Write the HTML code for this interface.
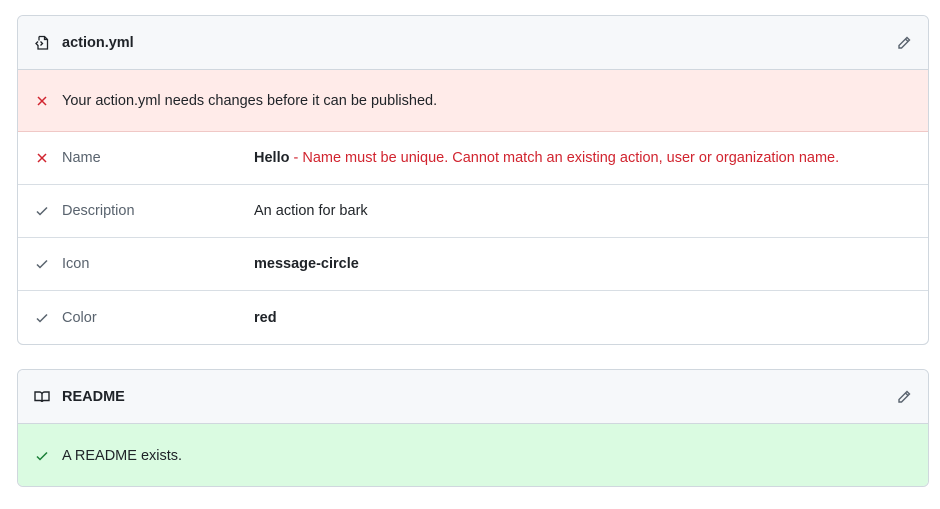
<!DOCTYPE html>
<html><head><style>
*{box-sizing:border-box;margin:0;padding:0}
body{width:940px;height:509px;background:#fff;font-family:"Liberation Sans",Arial,sans-serif;font-size:14.5px;color:#1f2328;position:relative}
.box{position:absolute;left:17px;width:912px;border:1px solid #d0d7de;border-radius:6px;overflow:hidden}
.hd{height:54px;background:#f6f8fa;border-bottom:1px solid #d0d7de;display:flex;align-items:center;padding-left:16px;font-weight:bold;position:relative}
.hd svg.i{margin-right:12px}
.pen{position:absolute;right:16px;top:19px}
.row{display:flex;align-items:center;padding-left:16px;border-bottom:1px solid #d8dee4;position:relative}
.row:last-child{border-bottom:none}
.ic{width:16px;margin-right:12px;display:flex}
.lab{width:180px;color:#59636e}
.val{position:absolute;left:236px}
</style></head><body>
<div class="box" style="top:15px;height:330px">
 <div class="hd"><svg class="i" width="16" height="16" viewBox="0 0 16 16" fill="none" stroke="#1f2328" stroke-width="1.3"><path d="M5 1.5h5.5l3 3v9.5h-9.5v-4M10.5 1.5v3h3M5 5.5v-4"/><path d="M4 6.5l-2 2 2 2M6.5 6.5l2 2-2 2"/></svg>action.yml
  <svg class="pen" width="16" height="16" viewBox="0 0 16 16" fill="none" stroke="#59636e" stroke-width="1.4"><path d="M11 2.5l2.5 2.5-8 8H3v-2.5z M9.5 4l2.5 2.5"/></svg></div>
 <div class="row" style="height:62px;background:#ffebe9;border-bottom:1px solid #f0c8c6"><span class="ic"><svg width="16" height="16" viewBox="0 0 16 16" stroke="#d1242f" stroke-width="1.5"><path d="M4 4l8 8M12 4l-8 8"/></svg></span>Your action.yml needs changes before it can be published.</div>
 <div class="row" style="height:53px"><span class="ic"><svg width="16" height="16" viewBox="0 0 16 16" stroke="#d1242f" stroke-width="1.5"><path d="M4 4l8 8M12 4l-8 8"/></svg></span><span class="lab">Name</span><span class="val"><b>Hello</b> <span style="color:#d1242f">- Name must be unique. Cannot match an existing action, user or organization name.</span></span></div>
 <div class="row" style="height:53px"><span class="ic"><svg width="16" height="16" viewBox="0 0 16 16" fill="none" stroke="#59636e" stroke-width="1.5"><path d="M3 8.5l3 3 7-7"/></svg></span><span class="lab">Description</span><span class="val">An action for bark</span></div>
 <div class="row" style="height:53px"><span class="ic"><svg width="16" height="16" viewBox="0 0 16 16" fill="none" stroke="#59636e" stroke-width="1.5"><path d="M3 8.5l3 3 7-7"/></svg></span><span class="lab">Icon</span><span class="val"><b>message-circle</b></span></div>
 <div class="row" style="height:53px"><span class="ic"><svg width="16" height="16" viewBox="0 0 16 16" fill="none" stroke="#59636e" stroke-width="1.5"><path d="M3 8.5l3 3 7-7"/></svg></span><span class="lab">Color</span><span class="val"><b>red</b></span></div>
</div>
<div class="box" style="top:369px;height:118px">
 <div class="hd"><svg class="i" width="16" height="16" viewBox="0 0 16 16" fill="none" stroke="#1f2328" stroke-width="1.4"><path d="M1 3h4.5c1.5 0 2.5 1 2.5 2.5V13c0-1-1-1.5-2-1.5H1zM15 3h-4.5C9 3 8 4 8 5.5V13c0-1 1-1.5 2-1.5h5z"/></svg>README
  <svg class="pen" width="16" height="16" viewBox="0 0 16 16" fill="none" stroke="#59636e" stroke-width="1.4"><path d="M11 2.5l2.5 2.5-8 8H3v-2.5z M9.5 4l2.5 2.5"/></svg></div>
 <div class="row" style="height:63px;background:#dafbe1;border-bottom:none"><span class="ic"><svg width="16" height="16" viewBox="0 0 16 16" fill="none" stroke="#1a7f37" stroke-width="1.5"><path d="M3 8.5l3 3 7-7"/></svg></span>A README exists.</div>
</div>
</body></html>
